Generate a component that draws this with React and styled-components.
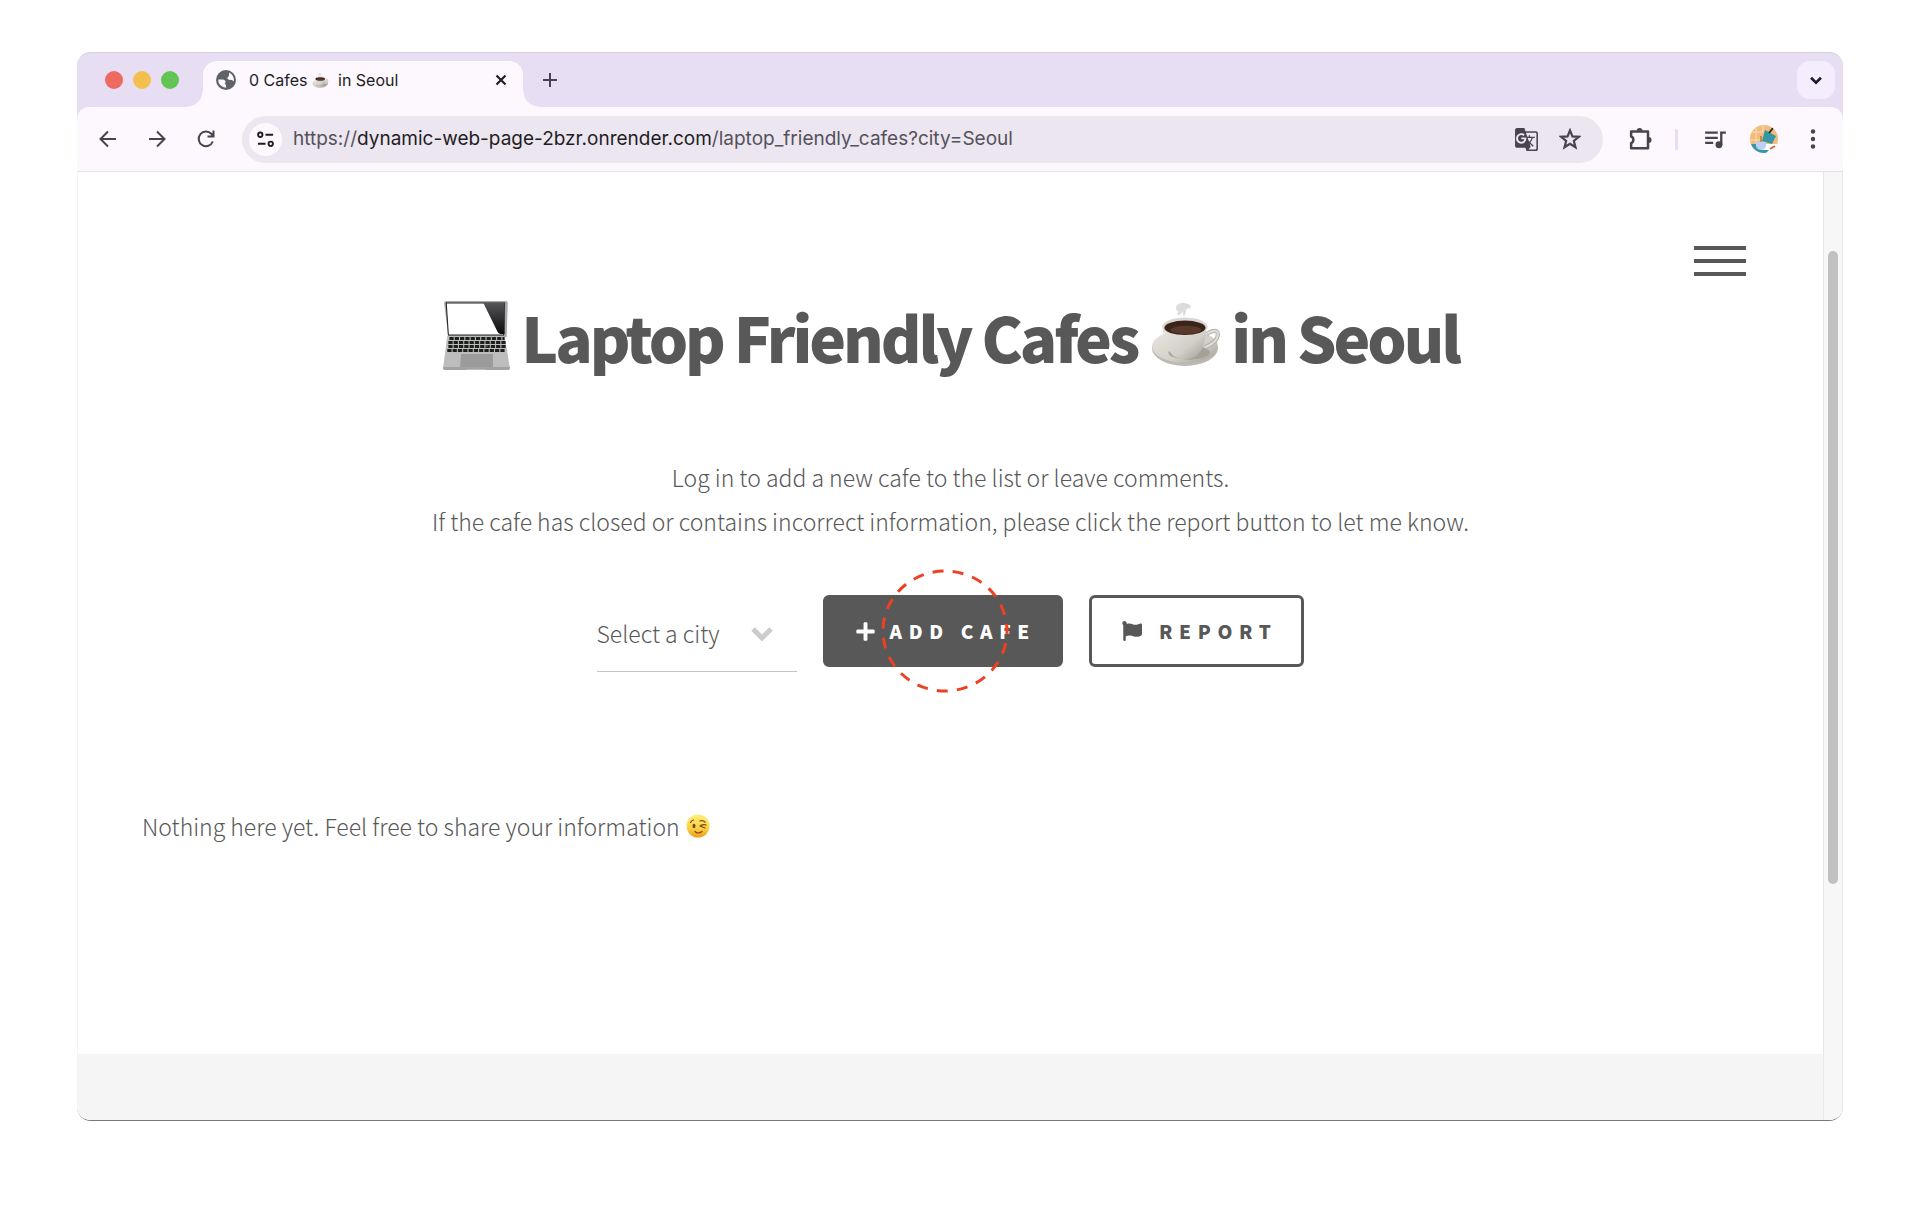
import React from "react";
import styled, { createGlobalStyle } from "styled-components";
import { MdGTranslate } from "react-icons/md";
import { FaPlus, FaFlag } from "react-icons/fa";

const GlobalStyle = createGlobalStyle`
  *, *::before, *::after { box-sizing: border-box; }
  body { margin: 0; background: #fff; }
  button { border: 0; padding: 0; margin: 0; background: none; color: inherit; font: inherit; cursor: pointer; }
  svg { display: block; flex: none; }
`;

const ui = `Inter, "Liberation Sans", sans-serif`;
const page = `"Noto Sans CJK SC", "Noto Sans CJK KR", sans-serif`;

const Window = styled.div`
  display: flex;
  flex-direction: column;
  min-height: calc(100vh - 153px);
  margin: 52px 77px 101px;
  overflow: hidden;
  border-radius: 14px;
  border-top: 1px solid #d6cde0;
  border-bottom: 1px solid #777;
  background: #e7def3;
  font-family: ${ui};
`;

const TabStrip = styled.div`
  display: flex;
  align-items: flex-end;
  height: 54px;
  padding: 0 8px 0 28px;
`;

const Lights = styled.div`
  display: flex;
  gap: 10px;
  align-self: center;
  margin-right: 24px;
`;

const Light = styled.button`
  width: 18px;
  height: 18px;
  border-radius: 50%;
  background: ${(p) => p.$color};
`;

const Tab = styled.div`
  position: relative;
  display: flex;
  align-items: center;
  width: 320px;
  height: 46px;
  padding: 0 12px 8px 12px;
  border-radius: 14px 14px 0 0;
  background: #fdf7fe;
  color: #1f1d24;
  font-size: 16px;
  line-height: 20px;

  &::before,
  &::after {
    content: "";
    position: absolute;
    bottom: 0;
    width: 16px;
    height: 16px;
  }
  &::before {
    right: 100%;
    background: radial-gradient(circle at 0 0, transparent 15px, #fdf7fe 16px);
  }
  &::after {
    left: 100%;
    background: radial-gradient(circle at 100% 0, transparent 15px, #fdf7fe 16px);
  }
`;

const TabTitle = styled.span`
  display: flex;
  align-items: center;
  flex: 1;
  margin-left: 12px;
  white-space: pre;
`;

const IconButton = styled.button`
  display: flex;
  align-items: center;
  justify-content: center;
  width: ${(p) => p.$size || 28}px;
  height: ${(p) => p.$size || 28}px;
  border-radius: 50%;
  color: ${(p) => p.$color || "#47434f"};
  background: ${(p) => p.$fill || "none"};
`;

const NewTab = styled(IconButton)`
  margin: 0 auto 13px 13px;
`;

const TabSearch = styled.button`
  display: flex;
  align-items: center;
  justify-content: center;
  align-self: center;
  width: 38px;
  height: 38px;
  border-radius: 13px;
  background: #f4edfd;
  color: #1f1d24;
`;

const Toolbar = styled.div`
  display: flex;
  align-items: center;
  height: 65px;
  padding: 0 16px 0 17px;
  border-bottom: 1px solid #e6dfec;
  border-radius: 12px 12px 0 0;
  background: #fdf7fe;
`;

const Group = styled.div`
  display: flex;
  align-items: center;
  gap: ${(p) => p.$gap}px;
`;

const AddressBar = styled.div`
  display: flex;
  align-items: center;
  flex: 1;
  height: 47px;
  margin: 0 23px 0 22px;
  padding: 0 19px 0 7px;
  border-radius: 24px;
  background: #ece6f0;
`;

const Address = styled.div`
  flex: 1;
  margin-left: 11px;
  color: #55515b;
  font-size: 19px;
  line-height: 24px;
  white-space: nowrap;
  outline: none;
`;

const Host = styled.span`
  color: #1f1d24;
`;

const Divider = styled.span`
  width: 3px;
  height: 21px;
  margin-right: 2px;
  border-radius: 2px;
  background: #e7def3;
`;

const Viewport = styled.div`
  display: flex;
  flex: 1;
  border-left: 1px solid #f4f4f4;
  background: #fff;
`;

const Page = styled.div`
  display: flex;
  flex-direction: column;
  flex: 1;
  color: #585858;
  font-family: ${page};
  font-weight: 300;
  font-size: 23px;
  line-height: 44px;
`;

const Header = styled.header`
  display: flex;
  justify-content: flex-end;
  padding: 74px 77px 0 0;
`;

const MenuButton = styled.button`
  display: flex;
  flex-direction: column;
  gap: 9px;
  width: 52px;
`;

const MenuBar = styled.span`
  height: 4px;
  background: #585858;
`;

const Main = styled.main`
  flex: 1;
  padding: 0 64px;
`;

const Hero = styled.section`
  display: flex;
  flex-direction: column;
  align-items: center;
  text-align: center;
`;

const Title = styled.h1`
  display: flex;
  align-items: center;
  margin: 12px 0 0;
  font-size: 62px;
  font-weight: 900;
  line-height: 96px;
  letter-spacing: -0.05em;
  white-space: nowrap;
`;

const TitleArt = styled.span`
  padding: ${(p) => p.$pad};
`;

const Lead = styled.p`
  margin: 71px 0 0;
`;

const Actions = styled.div`
  display: flex;
  align-items: flex-start;
  gap: 26px;
  margin-top: 52px;
`;

const SelectBox = styled.label`
  position: relative;
  display: block;
  width: 200px;

  svg {
    position: absolute;
    top: 32px;
    right: 24px;
    pointer-events: none;
  }
`;

const Select = styled.select`
  appearance: none;
  display: block;
  width: 100%;
  height: 77px;
  padding: 0;
  border: 0;
  border-bottom: 1px solid #c4c4c4;
  border-radius: 0;
  background: transparent;
  color: inherit;
  font: inherit;
`;

const Action = styled.button`
  position: relative;
  display: flex;
  align-items: center;
  gap: ${(p) => p.$gap}px;
  height: 72px;
  padding: 0 24px 0 ${(p) => (p.$primary ? 29 : 30)}px;
  border: 3px solid #585858;
  border-radius: 6px;
  background: ${(p) => (p.$primary ? "#585858" : "#fff")};
  color: ${(p) => (p.$primary ? "#fff" : "#585858")};
  font-size: 19px;
  font-weight: 900;
  line-height: 28px;
  letter-spacing: 0.35em;
  text-transform: uppercase;
  white-space: nowrap;
`;

const ClickMark = styled.svg`
  position: absolute;
  top: 50%;
  left: 51%;
  transform: translate(-50%, -50%);
  pointer-events: none;
`;

const Empty = styled.p`
  display: flex;
  align-items: center;
  gap: 6px;
  margin: 132px 0 0;
`;

const Footer = styled.footer`
  height: 66px;
  background: #f5f5f5;
`;

const ScrollTrack = styled.div`
  display: grid;
  grid-template-rows: 79fr 633fr 236fr;
  width: 20px;
  padding: 0 4px;
  border-left: 1px solid #e8e8e8;
  border-right: 1px solid #e8e8e8;
  background: #f8f7f8;
`;

const ScrollThumb = styled.div`
  grid-row: 2;
  border-radius: 6px;
  background: #c1c1c1;
`;

const Stroke = ({ size = 20, width = 2, children }) => (
  <svg width={size} height={size} viewBox="0 0 20 20" fill="none" stroke="currentColor" strokeWidth={width} aria-hidden="true">
    {children}
  </svg>
);

const Globe = () => (
  <svg width="22" height="22" viewBox="-1 -1 22 22" aria-hidden="true">
    <circle cx="10" cy="10" r="10" fill="#5f6368" />
    <path d="M2.200 9.500h5q2.500.5 2.500 2.500l-1 1.500q1.800 1 1.500 4.300A8 8 0 0 1 2.200 9.500z" fill="#fdf7fe" />
    <path d="M13 2.600A8 8 0 0 1 17.800 11.500q-1.800-2-3.500-1.600-2 .3-3-1.400.1-1.900 1.600-2.200z" fill="#fdf7fe" />
  </svg>
);

const Laptop = () => (
  <svg width="70" height="70" viewBox="0 0 66 70" preserveAspectRatio="none" aria-hidden="true">
    <defs>
      <linearGradient id="glare" x1="0" y1="0" x2="0" y2="1">
        <stop offset="0" stopColor="#555558" />
        <stop offset="1" stopColor="#0c0c0e" />
      </linearGradient>
    </defs>
    <path d="M4 0h56a2 2 0 0 1 2 2l-1 34H6L2 2a2 2 0 0 1 2-2z" fill="#a9a9a9" />
    <path d="M4 2h55l-1 32H6z" fill="#fff" stroke="#222" strokeWidth="1" />
    <path d="M39 2h20v31h-4q-2 0-3-3z" fill="url(#glare)" />
    <path d="M5 35h54l5 32q0 2-2 2H3q-2 0-2-2z" fill="#bdbdbd" />
    <path d="M1 66h63v1q0 2-2 2H42l-2-1H24l-2 1H3q-2 0-2-2z" fill="#a2a2a2" />
    <g stroke="#1d1f1d" strokeWidth="3" strokeDasharray="4 1">
      <path d="M7 37.500h52" />
      <path d="M6 41.500h54" />
      <path d="M6 45.500h54" />
      <path d="M5 49.500h55" />
    </g>
    <path d="M41 45h2" stroke="#4fae4a" strokeWidth="1" />
    <path d="M18 53h30v13H17z" fill="#9b9b9b" />
  </svg>
);

const Coffee = ({ width = 70, height = 65 }) => (
  <svg width={width} height={height} viewBox="0 0 68 63" aria-hidden="true">
    <defs>
      <linearGradient id="china" x1="0" y1="0" x2="1" y2="1">
        <stop offset="0" stopColor="#e9e7e2" />
        <stop offset="0.600" stopColor="#d3d0c9" />
        <stop offset="1" stopColor="#9d9992" />
      </linearGradient>
    </defs>
    <path d="M25 3q4-3 8-2t6 3q-1 3-3 2-3 1-2 4l-2 4q-2-2 0-5l-5 4q-3-1 0-4-4-1-2-6z" fill="#dcdcdc" />
    <ellipse cx="33" cy="45" rx="32" ry="17" fill="#bdb9b1" />
    <ellipse cx="33" cy="43" rx="32" ry="16" fill="url(#china)" />
    <ellipse cx="37" cy="49" rx="20" ry="7" fill="#a5a199" />
    <path d="M54 31q10-6 11 0 0 8-13 13" fill="none" stroke="#b6b3ac" strokeWidth="4" />
    <path d="M54 31q10-6 11 0 0 8-13 13" fill="none" stroke="#dedcd6" strokeWidth="2" />
    <path d="M11 22q2 25 12 31 10 5 20 0 10-6 11-31z" fill="url(#china)" />
    <ellipse cx="33" cy="24" rx="22" ry="9" fill="#dad8d2" />
    <ellipse cx="33" cy="25" rx="20" ry="7" fill="#3b251b" />
    <ellipse cx="34" cy="27" rx="15" ry="4" fill="#58392a" />
  </svg>
);

const Wink = () => (
  <svg width="24" height="24" viewBox="0 0 24 24" aria-hidden="true">
    <defs>
      <linearGradient id="wink" x1="0" y1="0" x2="0" y2="1">
        <stop offset="0" stopColor="#fff07a" />
        <stop offset="0.600" stopColor="#fbd043" />
        <stop offset="1" stopColor="#f09a1d" />
      </linearGradient>
    </defs>
    <circle cx="12" cy="12" r="11.500" fill="url(#wink)" />
    <ellipse cx="8" cy="12" rx="1.500" ry="2.200" fill="#7a4417" />
    <g fill="none" stroke="#7a4417" strokeWidth="1.200" strokeLinecap="round">
      <path d="M4.500 8.500q1-2 3-2.500" />
      <path d="M14 7q3-1 5 1" />
      <path d="M14 12q3-2 6-1M14 12l5 2" />
      <path d="M9 17.500q3 3 7 0" />
    </g>
  </svg>
);

const Avatar = () => (
  <svg width="28" height="28" viewBox="0 0 28 28" aria-hidden="true">
    <defs>
      <clipPath id="disc"><circle cx="14" cy="14" r="14" /></clipPath>
    </defs>
    <g clipPath="url(#disc)">
      <path d="M0 0h28v28H0z" fill="#f2bd7c" />
      <path d="M0 7h13M6 0v18M13 0v7M0 15h10" stroke="#f9dcb4" strokeWidth="1" />
      <path d="M0 19h28v9H0z" fill="#fff" />
      <path d="M0 19h7l4 6h8l-3 3H0z" fill="#3597a3" />
      <path d="M15 5l11 6-4 8-10-3z" fill="#3597a3" />
      <path d="M19 8l4-5" stroke="#27272b" strokeWidth="2" />
      <path d="M11 11v7" stroke="#9a5a35" strokeWidth="1" />
      <path d="M6 17h10q1 8-5 8t-5-8z" fill="#bcd0f2" />
      <path d="M20 24l5-3" stroke="#b5713b" strokeWidth="2" />
    </g>
  </svg>
);

export default function App() {
  return (
    <>
      <GlobalStyle />
      <Window>
        <TabStrip>
          <Lights>
            <Light $color="#ec6a5e" aria-label="Close window" />
            <Light $color="#f4bf4f" aria-label="Minimize window" />
            <Light $color="#61c554" aria-label="Zoom window" />
          </Lights>
          <Tab>
            <Globe />
            <TabTitle>
              0 Cafes <Coffee width={17} height={15} />  in Seoul
            </TabTitle>
            <IconButton $size={20} $color="#1f1d24" aria-label="Close tab">
              <Stroke size={18} width={2.4}><path d="M5 5l10 10M15 5L5 15" /></Stroke>
            </IconButton>
          </Tab>
          <NewTab aria-label="New tab">
            <Stroke><path d="M10 3v14M3 10h14" /></Stroke>
          </NewTab>
          <TabSearch aria-label="Search tabs">
            <Stroke size={18} width={3}><path d="M4.500 7.500L10 13l5.500-5.500" /></Stroke>
          </TabSearch>
        </TabStrip>

        <Toolbar>
          <Group $gap={21}>
            <IconButton aria-label="Back">
              <Stroke><path d="M18 10H3M10 2.500L2.500 10l7.500 7.500" /></Stroke>
            </IconButton>
            <IconButton aria-label="Forward">
              <Stroke><path d="M2 10h15M10 2.500l7.500 7.500-7.500 7.500" /></Stroke>
            </IconButton>
            <IconButton aria-label="Reload">
              <Stroke><path d="M16.800 12.500A7.300 7.300 0 1 1 15.500 5L17 7M17.500 1.500V7.500H11.500" /></Stroke>
            </IconButton>
          </Group>
          <AddressBar>
            <IconButton $size={33} $fill="#fdf7fe" $color="#1f1d24" aria-label="Site information">
              <Stroke size={19}>
                <circle cx="4.500" cy="5" r="2.300" />
                <path d="M10 5h8M2 14.500h8" />
                <circle cx="15.500" cy="14.500" r="2.300" />
              </Stroke>
            </IconButton>
            <Address role="textbox" aria-label="Address" contentEditable suppressContentEditableWarning spellCheck={false}>
              https://<Host>dynamic-web-page-2bzr.onrender.com</Host>/laptop_friendly_cafes?city=Seoul
            </Address>
            <Group $gap={16}>
              <IconButton aria-label="Translate this page">
                <MdGTranslate size={25} />
              </IconButton>
              <IconButton aria-label="Bookmark this tab">
                <Stroke size={22}><path d="M10 2.200l2.200 5.400 5.800.4-4.500 3.800 1.500 5.700-5-3.200-5 3.200 1.500-5.700L2 8l5.800-.4z" /></Stroke>
              </IconButton>
            </Group>
          </AddressBar>
          <Group $gap={21}>
            <IconButton aria-label="Extensions">
              <Stroke size={25}>
                <path d="M2.500 3.500h13.500v13.500H2.500v-4a3 3 0 0 0 0-5.500z" strokeLinejoin="round" />
                <path d="M7 3a2.300 2.300 0 0 1 4.600 0zM16.500 8a2.300 2.300 0 0 1 0 4.600z" fill="currentColor" stroke="none" />
              </Stroke>
            </IconButton>
            <Divider />
            <IconButton aria-label="Media controls">
              <Stroke size={23}>
                <path d="M1 4h11M1 8.500h11M1 13h7M15 14.500V4h4" />
                <circle cx="13" cy="14.500" r="3" fill="currentColor" stroke="none" />
              </Stroke>
            </IconButton>
            <IconButton aria-label="Profile"><Avatar /></IconButton>
            <IconButton aria-label="Browser menu">
              <Stroke>
                <g fill="currentColor" stroke="none">
                  <circle cx="10" cy="2.500" r="2.200" />
                  <circle cx="10" cy="10" r="2.200" />
                  <circle cx="10" cy="17.500" r="2.200" />
                </g>
              </Stroke>
            </IconButton>
          </Group>
        </Toolbar>

        <Viewport>
          <Page>
            <Header>
              <MenuButton aria-label="Menu">
                <MenuBar />
                <MenuBar />
                <MenuBar />
              </MenuButton>
            </Header>
            <Main>
              <Hero>
                <Title>
                  <TitleArt $pad="0 9px 0 0"><Laptop /></TitleArt>
                  Laptop Friendly Cafes
                  <TitleArt $pad="0 10px 4px 14px"><Coffee /></TitleArt>
                  in Seoul
                </Title>
                <Lead>
                  Log in to add a new cafe to the list or leave comments.
                  <br />
                  If the cafe has closed or contains incorrect information, please click the report button to let me know.
                </Lead>
                <Actions>
                  <SelectBox>
                    <Select aria-label="City" defaultValue="">
                      <option value="">Select a city</option>
                    </Select>
                    <svg width="22" height="15" viewBox="0 0 22 15" fill="none" stroke="#cccccc" strokeWidth="5" aria-hidden="true">
                      <path d="M2 2l9 9 9-9" />
                    </svg>
                  </SelectBox>
                  <Action $primary $gap={14}>
                    <FaPlus size={21} />
                    Add Cafe
                    <ClickMark width="128" height="124" viewBox="0 0 128 124" fill="none" aria-hidden="true">
                      <ellipse cx="64" cy="62" rx="62" ry="60" stroke="#ee4023" strokeWidth="3" strokeDasharray="11 9.180" strokeDashoffset="8" />
                    </ClickMark>
                  </Action>
                  <Action $gap={17}>
                    <FaFlag size={20} />
                    Report
                  </Action>
                </Actions>
              </Hero>
              <Empty>
                Nothing here yet. Feel free to share your information <Wink />
              </Empty>
            </Main>
            <Footer />
          </Page>
          <ScrollTrack>
            <ScrollThumb />
          </ScrollTrack>
        </Viewport>
      </Window>
    </>
  );
}
